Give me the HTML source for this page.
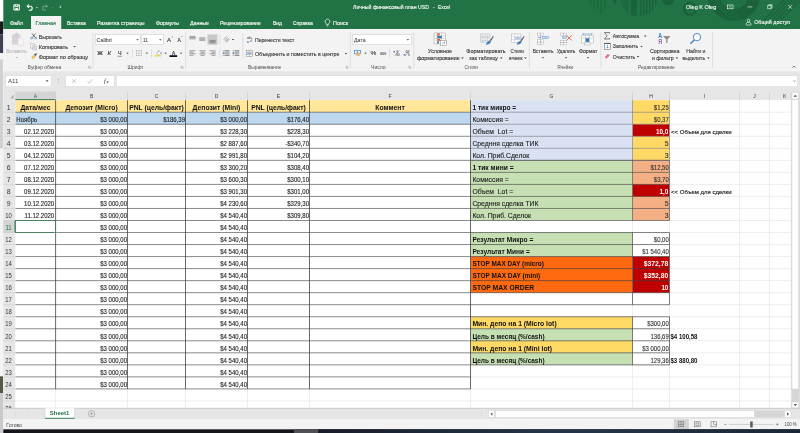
<!DOCTYPE html>
<html lang="ru">
<head>
<meta charset="utf-8">
<title>Личный финансовый план USD - Excel</title>
<style>
html,body{margin:0;padding:0;background:#fff;}
body{width:800px;height:433px;overflow:hidden;position:relative;font-family:'Liberation Sans', sans-serif;}
#app{position:absolute;left:0;top:0;width:800px;height:433px;overflow:hidden;}
svg{display:block;font-family:'Liberation Sans', sans-serif;}
svg{will-change:transform;}
svg text{white-space:pre;}
</style>
</head>
<body>
<div id="app">
<svg width="800" height="433" viewBox="0 0 800 433">
<rect x="0.00" y="0.00" width="800.00" height="433.00" fill="#ffffff"/>
<rect x="0.00" y="0.00" width="3.30" height="21.40" fill="#ffffff"/>
<rect x="0.00" y="21.40" width="3.30" height="13.00" fill="#1b1b1f"/>
<rect x="0.00" y="34.40" width="3.30" height="18.80" fill="#3b4450"/>
<rect x="0.00" y="53.20" width="3.30" height="380.00" fill="#f4f4f4"/>
<rect x="0.00" y="59.40" width="2.90" height="89.00" fill="#d0d0d0"/>
<rect x="0.00" y="376.30" width="3.00" height="16.90" fill="#555a43"/>
<rect x="0.00" y="393.20" width="3.30" height="40.00" fill="#cacaca"/>
<rect x="3.30" y="0.00" width="796.70" height="29.00" fill="#217346"/>
<defs><clipPath id="cpd"><circle cx="639" cy="-2" r="18.5"/></clipPath><clipPath id="cpt"><rect x="0" y="0" width="800" height="29"/></clipPath></defs>
<g fill="#1a6239" stroke="none" clip-path="url(#cpt)">
<rect x="590.6" y="0" width="0.8" height="6"/>
<rect x="593.6" y="0" width="0.8" height="8"/>
<rect x="597" y="0" width="0.8" height="10.5"/>
<rect x="600.6" y="0" width="0.9" height="13.7"/>
<rect x="604.6" y="0" width="0.8" height="9"/>
<path d="M612,0 h4.4 v5.6 z"/>
<g clip-path="url(#cpd)"><rect x="620.6" y="0" width="8" height="20" opacity="0.55"/><rect x="631" y="0" width="5.6" height="20"/>
<rect x="640" y="0" width="1.5" height="20"/>
<rect x="643" y="0" width="1.5" height="20"/>
<rect x="646" y="0" width="1.5" height="20"/>
<rect x="649" y="0" width="1.5" height="20"/>
<rect x="652" y="0" width="1.5" height="20"/>
<rect x="655" y="0" width="1.5" height="20"/>
</g>
<circle cx="668" cy="-0.5" r="6"/>
</g>
<circle cx="690" cy="9" r="6" fill="none" stroke="#1a6239" stroke-width="2.4"/>
<circle cx="690" cy="9" r="1.6" fill="#1a6239"/>
<g clip-path="url(#cpt)"><circle cx="734" cy="-5" r="20" fill="none" stroke="#1a6239" stroke-width="12"/>
<g stroke="#217346" stroke-width="0.7">
<line x1="712.0" y1="0" x2="734.0" y2="22"/>
<line x1="715.2" y1="0" x2="737.2" y2="22"/>
<line x1="718.4" y1="0" x2="740.4" y2="22"/>
<line x1="721.6" y1="0" x2="743.6" y2="22"/>
</g>
<g stroke="#1a6239" stroke-width="1.1">
<line x1="764.0" y1="20" x2="786.0" y2="-2"/>
<line x1="768.2" y1="20" x2="790.2" y2="-2"/>
<line x1="772.4" y1="20" x2="794.4" y2="-2"/>
<line x1="776.6" y1="20" x2="798.6" y2="-2"/>
<line x1="780.8" y1="20" x2="802.8" y2="-2"/>
</g></g>
<rect x="3.30" y="29.00" width="796.70" height="42.60" fill="#f3f3f3"/>
<line x1="3.30" y1="71.80" x2="800.00" y2="71.80" stroke="#dcdcdc" stroke-width="0.7"/>
<rect x="3.30" y="72.10" width="796.70" height="27.90" fill="#e6e6e6"/>
<rect x="31.00" y="16.00" width="30.20" height="13.20" fill="#f3f3f3"/>
<g fill="none" stroke="#ffffff" stroke-width="1.0"><path d="M13.9,4.8 h5.4 v5.2 h-5.4 z"/><path d="M15.2,4.8 v1.8 h2.8 v-1.8" /><rect x="15.4" y="8" width="2.4" height="2" fill="#ffffff" stroke="none"/></g>
<g fill="none" stroke="#ffffff" stroke-width="1.1"><path d="M27.6,6.2 h2.6 a2,2 0 0 1 0,4 h-1.4"/><path d="M28.9,4.6 L27.2,6.2 L28.9,7.8" /></g>
<path d="M35.91,6.91 L37.89,6.91 L36.90,7.94 Z" fill="#ffffff" stroke="none" stroke-width="1"/>
<g fill="none" stroke="#7fb096" stroke-width="0.9"><path d="M47,6.2 h-2.6 a2,2 0 0 0 0,4 h1.4"/><path d="M45.7,4.6 L47.4,6.2 L45.7,7.8" /></g>
<path d="M51.51,6.91 L53.49,6.91 L52.50,7.94 Z" fill="#6aa384" stroke="none" stroke-width="1"/>
<line x1="59.40" y1="6.20" x2="61.40" y2="6.20" stroke="#ffffff" stroke-width="0.5"/>
<path d="M59.41,7.30 L61.39,7.30 L60.40,8.34 Z" fill="#ffffff" stroke="none" stroke-width="1"/>
<text x="353.00" y="8.97" font-size="4.9" fill="#ffffff" textLength="76.00" lengthAdjust="spacingAndGlyphs" stroke="#ffffff" stroke-width="0.1">Личный финансовый план USD</text>
<text x="433.00" y="8.97" font-size="4.9" fill="#ffffff" stroke="#ffffff" stroke-width="0.1">-</text>
<text x="438.00" y="8.97" font-size="4.9" fill="#ffffff" textLength="12.20" lengthAdjust="spacingAndGlyphs" stroke="#ffffff" stroke-width="0.1">Excel</text>
<text x="686.00" y="8.57" font-size="4.9" fill="#ffffff" textLength="30.30" lengthAdjust="spacingAndGlyphs" stroke="#ffffff" stroke-width="0.1">Oleg K Oleg</text>
<g fill="none" stroke="#ffffff" stroke-width="0.6"><rect x="727.4" y="5" width="5.6" height="3.8"/><path d="M729.2,7.4 L730.2,6.2 L731.2,7.4"/></g>
<line x1="747.50" y1="6.90" x2="752.30" y2="6.90" stroke="#ffffff" stroke-width="0.6"/>
<g fill="none" stroke="#ffffff" stroke-width="0.6"><rect x="767.8" y="5.6" width="3.2" height="3.2"/><path d="M768.8,5.6 v-0.9 h3.2 v3.2 h-1"/></g>
<g stroke="#ffffff" stroke-width="0.6"><line x1="788.2" y1="4.8" x2="792" y2="8.8"/><line x1="792" y1="4.8" x2="788.2" y2="8.8"/></g>
<g fill="none" stroke="#ffffff" stroke-width="0.6"><circle cx="748.6" cy="20.6" r="1.3"/><path d="M746.2,25 v-0.8 a2.4,2 0 0 1 4.8,0 v0.8 z"/></g>
<text x="754.20" y="23.97" font-size="4.9" fill="#ffffff" textLength="36.00" lengthAdjust="spacingAndGlyphs" stroke="#ffffff" stroke-width="0.1">Общий доступ</text>
<text x="10.00" y="24.60" font-size="5.0" fill="#ffffff" textLength="13.10" lengthAdjust="spacingAndGlyphs" stroke="#ffffff" stroke-width="0.1">Файл</text>
<text x="35.60" y="24.60" font-size="5.0" fill="#217346" textLength="20.30" lengthAdjust="spacingAndGlyphs" stroke="#217346" stroke-width="0.1">Главная</text>
<text x="66.90" y="24.60" font-size="5.0" fill="#ffffff" textLength="19.10" lengthAdjust="spacingAndGlyphs" stroke="#ffffff" stroke-width="0.1">Вставка</text>
<text x="96.90" y="24.60" font-size="5.0" fill="#ffffff" textLength="47.50" lengthAdjust="spacingAndGlyphs" stroke="#ffffff" stroke-width="0.1">Разметка страницы</text>
<text x="156.00" y="24.60" font-size="5.0" fill="#ffffff" textLength="23.00" lengthAdjust="spacingAndGlyphs" stroke="#ffffff" stroke-width="0.1">Формулы</text>
<text x="190.00" y="24.60" font-size="5.0" fill="#ffffff" textLength="19.00" lengthAdjust="spacingAndGlyphs" stroke="#ffffff" stroke-width="0.1">Данные</text>
<text x="220.00" y="24.60" font-size="5.0" fill="#ffffff" textLength="41.00" lengthAdjust="spacingAndGlyphs" stroke="#ffffff" stroke-width="0.1">Рецензирование</text>
<text x="273.00" y="24.60" font-size="5.0" fill="#ffffff" textLength="9.00" lengthAdjust="spacingAndGlyphs" stroke="#ffffff" stroke-width="0.1">Вид</text>
<text x="292.80" y="24.60" font-size="5.0" fill="#ffffff" textLength="20.20" lengthAdjust="spacingAndGlyphs" stroke="#ffffff" stroke-width="0.1">Справка</text>
<text x="333.00" y="24.60" font-size="5.0" fill="#ffffff" textLength="15.00" lengthAdjust="spacingAndGlyphs" stroke="#ffffff" stroke-width="0.1">Поиск</text>
<g fill="none" stroke="#ffffff" stroke-width="0.7"><path d="M326.6,24.6 v-0.8 a2.4,2.4 0 1 1 1.8,0 v0.8 z"/><line x1="326.7" y1="26" x2="328.3" y2="26"/></g>
<g>
<rect x="12.1" y="34.6" width="8.2" height="9.9" rx="0.6" fill="#d8d2d6"/>
<path d="M14.4,35.4 v-1 a0.6,0.6 0 0 1 0.6,-0.6 h0.5 a1,1 0 0 1 2,0 h0.5 a0.6,0.6 0 0 1 0.6,0.6 v1 z" fill="#cbc5c9"/><circle cx="16.5" cy="33.9" r="0.45" fill="#f3f3f3"/>
<path d="M18,38.2 h3.4 l2,2 v5.4 h-5.4 z" fill="#f6f2f6" stroke="#d9d3d8" stroke-width="0.4"/>
</g>
<text x="6.20" y="53.10" font-size="5.0" fill="#b9b9b9" textLength="20.60" lengthAdjust="spacingAndGlyphs" stroke="#b9b9b9" stroke-width="0.1">Вставить</text>
<path d="M15.59,57.00 L18.01,57.00 L16.80,58.26 Z" fill="#a8a8a8" stroke="none" stroke-width="1"/>
<g fill="none" stroke="#444" stroke-width="0.7"><line x1="31.9" y1="33.4" x2="35.2" y2="37.4"/><line x1="35.7" y1="33.4" x2="32.4" y2="37.4"/></g>
<g fill="none" stroke="#3b7bbf" stroke-width="0.6"><ellipse cx="31.8" cy="38.1" rx="1.2" ry="0.8"/><ellipse cx="35.8" cy="38.1" rx="1.2" ry="0.8"/></g>
<text x="38.80" y="38.80" font-size="5.0" fill="#333" textLength="23.10" lengthAdjust="spacingAndGlyphs" stroke="#333" stroke-width="0.1">Вырезать</text>
<g fill="#fafafa" stroke="#8a8a8a" stroke-width="0.4"><path d="M30.6,43.4 h2.6 l1.2,1.2 v3.6 h-3.8 z"/><path d="M32.8,45 h2.6 l1.2,1.2 v3.6 h-3.8 z"/></g>
<rect x="33.6" y="46.6" width="2" height="0.5" fill="#3b7bbf"/><rect x="33.6" y="47.8" width="2" height="0.5" fill="#3b7bbf"/>
<text x="38.80" y="48.80" font-size="5.0" fill="#333" textLength="29.30" lengthAdjust="spacingAndGlyphs" stroke="#333" stroke-width="0.1">Копировать</text>
<path d="M73.33,45.97 L75.86,45.97 L74.60,47.29 Z" fill="#3a3a3a" stroke="none" stroke-width="1"/>
<path d="M31,57.2 l2.6,-2.2 l2,1.8 l-2.4,2.6 z" fill="#f0c060"/><path d="M33.8,54.8 l2.2,-1.8 l1,1 l-1.6,2.2 z" fill="#666"/>
<text x="38.80" y="59.00" font-size="5.0" fill="#333" textLength="49.30" lengthAdjust="spacingAndGlyphs" stroke="#333" stroke-width="0.1">Формат по образцу</text>
<text x="27.80" y="68.97" font-size="4.9" fill="#4d4d4d" textLength="33.50" lengthAdjust="spacingAndGlyphs">Буфер обмена</text>
<g fill="none" stroke="#777" stroke-width="0.4"><path d="M88.50,68.30 v-2 h2"/><path d="M89.30,67.10 l1.2,1.2 m0,-0.9 v0.9 h-0.9"/></g>
<line x1="93.00" y1="32.50" x2="93.00" y2="68.50" stroke="#d5d5d5" stroke-width="0.7"/>
<rect x="95.3" y="34.6" width="45.4" height="10" fill="#fff" stroke="#c6c6c6" stroke-width="0.5"/>
<rect x="141.9" y="34.6" width="21.6" height="10" fill="#fff" stroke="#c6c6c6" stroke-width="0.5"/>
<text x="96.60" y="41.50" font-size="5.0" fill="#555" textLength="15.20" lengthAdjust="spacingAndGlyphs" stroke="#555" stroke-width="0.1">Calibri</text>
<path d="M136.24,39.17 L138.76,39.17 L137.50,40.49 Z" fill="#3a3a3a" stroke="none" stroke-width="1"/>
<text x="143.00" y="41.50" font-size="5.0" fill="#555" textLength="5.00" lengthAdjust="spacingAndGlyphs" stroke="#555" stroke-width="0.1">11</text>
<path d="M159.04,39.17 L161.56,39.17 L160.30,40.49 Z" fill="#3a3a3a" stroke="none" stroke-width="1"/>
<text x="166.90" y="42.04" font-size="6.0" fill="#333" stroke="#333" stroke-width="0.1">A</text>
<path d="M171.4,37.2 l0.8,-1 l0.8,1 z" fill="#3b7bbf"/>
<text x="177.60" y="42.00" font-size="5.0" fill="#333" stroke="#333" stroke-width="0.1">A</text>
<path d="M181,36.2 l0.8,1 l0.8,-1 z" fill="#3b7bbf"/>
<text x="97.30" y="55.14" font-size="5.4" fill="#333" font-weight="700" textLength="5.60" lengthAdjust="spacingAndGlyphs">Ж</text>
<text x="107.50" y="55.14" font-size="5.4" fill="#333" font-style="italic" textLength="3.60" lengthAdjust="spacingAndGlyphs" stroke="#333" stroke-width="0.1">К</text>
<text x="117.80" y="54.94" font-size="5.4" fill="#333" textLength="3.80" lengthAdjust="spacingAndGlyphs" stroke="#333" stroke-width="0.1">Ч</text>
<line x1="117.60" y1="56.30" x2="121.80" y2="56.30" stroke="#333" stroke-width="0.5"/>
<path d="M126.23,52.67 L128.76,52.67 L127.50,53.99 Z" fill="#3a3a3a" stroke="none" stroke-width="1"/>
<line x1="132.50" y1="49.00" x2="132.50" y2="58.00" stroke="#d5d5d5" stroke-width="0.7"/>
<g fill="#fff" stroke="#b4b4b4" stroke-width="0.6"><rect x="136.3" y="50.5" width="5.4" height="5.2"/><line x1="139" y1="50.5" x2="139" y2="55.7"/><line x1="136.3" y1="53.1" x2="141.7" y2="53.1"/></g>
<path d="M145.64,52.67 L148.16,52.67 L146.90,53.99 Z" fill="#3a3a3a" stroke="none" stroke-width="1"/>
<line x1="151.50" y1="49.00" x2="151.50" y2="58.00" stroke="#d5d5d5" stroke-width="0.7"/>
<path d="M156.6,53.6 l2.4,-2.8 l2.4,2.2 l-2.6,2.2 z" fill="#fff" stroke="#777" stroke-width="0.45"/><path d="M161.2,52 q0.9,1.3 0.1,2.2 q-0.8,-0.9 -0.1,-2.2" fill="#3b7bbf"/><path d="M158.4,50.2 v2" stroke="#777" stroke-width="0.4"/>
<rect x="154.30" y="55.20" width="6.90" height="1.30" fill="#e8dc3c"/>
<path d="M164.34,52.67 L166.86,52.67 L165.60,53.99 Z" fill="#3a3a3a" stroke="none" stroke-width="1"/>
<text x="173.50" y="54.63" font-size="4.8" fill="#222" text-anchor="middle" stroke="#222" stroke-width="0.1">A</text>
<rect x="169.50" y="55.20" width="7.60" height="1.80" fill="#111"/>
<path d="M179.74,52.67 L182.26,52.67 L181.00,53.99 Z" fill="#3a3a3a" stroke="none" stroke-width="1"/>
<text x="127.50" y="68.97" font-size="4.9" fill="#4d4d4d" textLength="16.00" lengthAdjust="spacingAndGlyphs">Шрифт</text>
<g fill="none" stroke="#777" stroke-width="0.4"><path d="M181.00,68.30 v-2 h2"/><path d="M181.80,67.10 l1.2,1.2 m0,-0.9 v0.9 h-0.9"/></g>
<line x1="185.60" y1="32.50" x2="185.60" y2="68.50" stroke="#d5d5d5" stroke-width="0.7"/>
<rect x="207.50" y="34.50" width="10.00" height="10.20" fill="#c8c8c8"/>
<line x1="189.40" y1="36.40" x2="195.60" y2="36.40" stroke="#666" stroke-width="0.62"/>
<line x1="189.40" y1="37.60" x2="195.60" y2="37.60" stroke="#666" stroke-width="0.62"/>
<line x1="189.40" y1="38.80" x2="195.60" y2="38.80" stroke="#666" stroke-width="0.62"/>
<line x1="199.20" y1="37.90" x2="205.40" y2="37.90" stroke="#666" stroke-width="0.62"/>
<line x1="199.20" y1="39.10" x2="205.40" y2="39.10" stroke="#666" stroke-width="0.62"/>
<line x1="199.20" y1="40.30" x2="205.40" y2="40.30" stroke="#666" stroke-width="0.62"/>
<line x1="209.40" y1="40.40" x2="215.60" y2="40.40" stroke="#666" stroke-width="0.62"/>
<line x1="209.40" y1="41.60" x2="215.60" y2="41.60" stroke="#666" stroke-width="0.62"/>
<line x1="209.40" y1="42.80" x2="215.60" y2="42.80" stroke="#666" stroke-width="0.62"/>
<line x1="219.80" y1="34.50" x2="219.80" y2="44.50" stroke="#d5d5d5" stroke-width="0.7"/>
<g stroke="#666" stroke-width="0.5" fill="none"><path d="M223.6,39.6 l3.2,-3.2 m-2.2,4.2 l3.2,-3.2 m-2.2,4.2 l3.2,-3.2"/><path d="M226.2,42.2 l3,-3" stroke="#444"/></g>
<path d="M231.74,38.97 L234.26,38.97 L233.00,40.29 Z" fill="#3a3a3a" stroke="none" stroke-width="1"/>
<line x1="189.40" y1="50.80" x2="195.60" y2="50.80" stroke="#666" stroke-width="0.62"/>
<line x1="189.40" y1="52.30" x2="193.40" y2="52.30" stroke="#666" stroke-width="0.62"/>
<line x1="189.40" y1="53.80" x2="195.60" y2="53.80" stroke="#666" stroke-width="0.62"/>
<line x1="189.40" y1="55.30" x2="193.40" y2="55.30" stroke="#666" stroke-width="0.62"/>
<line x1="199.40" y1="50.80" x2="205.60" y2="50.80" stroke="#666" stroke-width="0.62"/>
<line x1="200.50" y1="52.30" x2="204.50" y2="52.30" stroke="#666" stroke-width="0.62"/>
<line x1="199.40" y1="53.80" x2="205.60" y2="53.80" stroke="#666" stroke-width="0.62"/>
<line x1="200.50" y1="55.30" x2="204.50" y2="55.30" stroke="#666" stroke-width="0.62"/>
<line x1="209.40" y1="50.80" x2="215.60" y2="50.80" stroke="#666" stroke-width="0.62"/>
<line x1="211.60" y1="52.30" x2="215.60" y2="52.30" stroke="#666" stroke-width="0.62"/>
<line x1="209.40" y1="53.80" x2="215.60" y2="53.80" stroke="#666" stroke-width="0.62"/>
<line x1="211.60" y1="55.30" x2="215.60" y2="55.30" stroke="#666" stroke-width="0.62"/>
<line x1="219.80" y1="49.00" x2="219.80" y2="58.00" stroke="#d5d5d5" stroke-width="0.7"/>
<line x1="225.20" y1="50.80" x2="229.40" y2="50.80" stroke="#666" stroke-width="0.62"/>
<line x1="225.20" y1="52.30" x2="229.40" y2="52.30" stroke="#666" stroke-width="0.62"/>
<line x1="225.20" y1="53.80" x2="229.40" y2="53.80" stroke="#666" stroke-width="0.62"/>
<line x1="225.20" y1="55.30" x2="229.40" y2="55.30" stroke="#666" stroke-width="0.62"/>
<line x1="222.60" y1="50.80" x2="229.60" y2="50.80" stroke="#777" stroke-width="0.55"/>
<line x1="222.60" y1="55.30" x2="229.60" y2="55.30" stroke="#777" stroke-width="0.55"/>
<rect x="222.79999999999998" y="52.3" width="1.8" height="1.6" fill="#3b7bbf"/>
<line x1="235.00" y1="50.80" x2="239.20" y2="50.80" stroke="#666" stroke-width="0.62"/>
<line x1="235.00" y1="52.30" x2="239.20" y2="52.30" stroke="#666" stroke-width="0.62"/>
<line x1="235.00" y1="53.80" x2="239.20" y2="53.80" stroke="#666" stroke-width="0.62"/>
<line x1="235.00" y1="55.30" x2="239.20" y2="55.30" stroke="#666" stroke-width="0.62"/>
<line x1="232.40" y1="50.80" x2="239.40" y2="50.80" stroke="#777" stroke-width="0.55"/>
<line x1="232.40" y1="55.30" x2="239.40" y2="55.30" stroke="#777" stroke-width="0.55"/>
<rect x="232.6" y="52.3" width="1.8" height="1.6" fill="#3b7bbf"/>
<line x1="242.90" y1="33.50" x2="242.90" y2="58.50" stroke="#d5d5d5" stroke-width="0.7"/>
<text x="247.00" y="39.43" font-size="3.9" fill="#6a6a6a" font-weight="700" textLength="4.80" lengthAdjust="spacingAndGlyphs">ab</text>
<text x="247.00" y="42.83" font-size="3.9" fill="#6a6a6a" font-weight="700">c</text>
<path d="M252,38.6 v2.6 h-2 m0.9,-0.9 l-0.9,0.9 l0.9,0.9" fill="none" stroke="#3b7bbf" stroke-width="0.5"/>
<text x="255.00" y="41.70" font-size="5.0" fill="#333" textLength="39.40" lengthAdjust="spacingAndGlyphs" stroke="#333" stroke-width="0.1">Перенести текст</text>
<rect x="246.2" y="50.4" width="6.2" height="6" fill="#fdfdfd" stroke="#858585" stroke-width="0.5"/><rect x="246.5" y="52.3" width="5.6" height="2.2" fill="#bcd4ee"/><g stroke="#858585" stroke-width="0.4"><line x1="246.2" y1="52.2" x2="252.4" y2="52.2"/><line x1="246.2" y1="54.6" x2="252.4" y2="54.6"/><line x1="249.3" y1="50.4" x2="249.3" y2="52.2"/><line x1="249.3" y1="54.6" x2="249.3" y2="56.4"/></g><path d="M247.4,53.4 h3.8" stroke="#3b7bbf" stroke-width="0.45" fill="none"/>
<text x="255.00" y="55.70" font-size="5.0" fill="#333" textLength="84.40" lengthAdjust="spacingAndGlyphs" stroke="#333" stroke-width="0.1">Объединить и поместить в центре</text>
<path d="M344.63,52.97 L347.16,52.97 L345.90,54.29 Z" fill="#3a3a3a" stroke="none" stroke-width="1"/>
<text x="248.10" y="68.97" font-size="4.9" fill="#4d4d4d" textLength="33.20" lengthAdjust="spacingAndGlyphs">Выравнивание</text>
<g fill="none" stroke="#777" stroke-width="0.4"><path d="M346.00,68.30 v-2 h2"/><path d="M346.80,67.10 l1.2,1.2 m0,-0.9 v0.9 h-0.9"/></g>
<line x1="350.40" y1="32.50" x2="350.40" y2="68.50" stroke="#d5d5d5" stroke-width="0.7"/>
<rect x="352.8" y="34.6" width="58.4" height="10" fill="#fff" stroke="#c6c6c6" stroke-width="0.5"/>
<text x="354.10" y="41.60" font-size="5.0" fill="#555" textLength="11.40" lengthAdjust="spacingAndGlyphs" stroke="#555" stroke-width="0.1">Дата</text>
<path d="M406.63,39.17 L409.16,39.17 L407.90,40.49 Z" fill="#3a3a3a" stroke="none" stroke-width="1"/>
<rect x="354.3" y="50.3" width="6.2" height="3.6" fill="#fff" stroke="#3b7bbf" stroke-width="0.7"/><circle cx="357.4" cy="52.1" r="0.9" fill="#3b7bbf"/><ellipse cx="358.6" cy="53.4" rx="2.1" ry="0.8" fill="#e8b25a"/><ellipse cx="358.2" cy="55.2" rx="2.1" ry="0.8" fill="#e8b25a"/>
<path d="M364.34,52.67 L366.87,52.67 L365.60,53.99 Z" fill="#3a3a3a" stroke="none" stroke-width="1"/>
<text x="370.50" y="55.41" font-size="6.2" fill="#3a3a3a" textLength="5.80" lengthAdjust="spacingAndGlyphs" stroke="#3a3a3a" stroke-width="0.1">%</text>
<text x="380.00" y="55.00" font-size="4.4" fill="#505050" font-weight="700" textLength="6.20" lengthAdjust="spacingAndGlyphs">000</text>
<line x1="389.60" y1="49.00" x2="389.60" y2="58.00" stroke="#d5d5d5" stroke-width="0.7"/>
<g font-size="3" fill="#555" font-family="Liberation Sans, sans-serif"></g>
<rect x="393.5" y="50.9" width="1.5" height="1.5" fill="#3b7bbf"/><path d="M394.4,56.2 L399.2,50.4" stroke="#666" stroke-width="0.55"/>
<text x="396.60" y="52.69" font-size="3.2" fill="#666" font-weight="700">0</text>
<text x="396.20" y="56.29" font-size="3.2" fill="#666" font-weight="700">00</text>
<rect x="403.7" y="54" width="1.5" height="1.5" fill="#3b7bbf"/><path d="M405,56.2 L409.6,50.4" stroke="#666" stroke-width="0.55"/>
<text x="405.60" y="52.69" font-size="3.2" fill="#666" font-weight="700">00</text>
<text x="408.00" y="56.29" font-size="3.2" fill="#666" font-weight="700">0</text>
<text x="371.00" y="68.97" font-size="4.9" fill="#4d4d4d" textLength="14.60" lengthAdjust="spacingAndGlyphs">Число</text>
<g fill="none" stroke="#777" stroke-width="0.4"><path d="M408.80,68.30 v-2 h2"/><path d="M409.60,67.10 l1.2,1.2 m0,-0.9 v0.9 h-0.9"/></g>
<line x1="413.80" y1="32.50" x2="413.80" y2="68.50" stroke="#d5d5d5" stroke-width="0.7"/>
<g><rect x="434" y="33" width="11.6" height="10.9" fill="#fff" stroke="#9a9a9a" stroke-width="0.45"/>
<line x1="434" y1="35.72" x2="445.6" y2="35.72" stroke="#a8a8a8" stroke-width="0.4"/>
<line x1="434" y1="38.44" x2="445.6" y2="38.44" stroke="#a8a8a8" stroke-width="0.4"/>
<line x1="434" y1="41.16" x2="445.6" y2="41.16" stroke="#a8a8a8" stroke-width="0.4"/>
<line x1="437" y1="33" x2="437" y2="43.9" stroke="#a8a8a8" stroke-width="0.4"/><line x1="441.6" y1="33" x2="441.6" y2="43.9" stroke="#a8a8a8" stroke-width="0.4"/>
<rect x="437.2" y="33.3" width="2.6" height="2.2" fill="#e0603a"/><rect x="437.2" y="36" width="4.8" height="2.2" fill="#3b7bbf"/><rect x="437.2" y="38.7" width="3" height="2.2" fill="#e0603a"/><rect x="437.2" y="41.4" width="1.8" height="2.2" fill="#3b7bbf"/>
<rect x="440.6" y="40.4" width="5.8" height="4.8" fill="#fff" stroke="#777" stroke-width="0.45"/><path d="M442.4,43.8 l2.2,-2 m-0.2,2 v-2" stroke="#444" stroke-width="0.45" fill="none"/></g>
<text x="428.10" y="53.30" font-size="5.0" fill="#333" textLength="23.80" lengthAdjust="spacingAndGlyphs" stroke="#333" stroke-width="0.1">Условное</text>
<text x="416.90" y="59.90" font-size="5.0" fill="#333" textLength="42.80" lengthAdjust="spacingAndGlyphs" stroke="#333" stroke-width="0.1">форматирование</text>
<path d="M461.24,57.57 L463.76,57.57 L462.50,58.89 Z" fill="#3a3a3a" stroke="none" stroke-width="1"/>
<rect x="480.4" y="34" width="9.6" height="8.4" fill="#fff" stroke="#999" stroke-width="0.4"/>
<rect x="480.4" y="36.1" width="9.6" height="2.1" fill="#dbe8f5"/><rect x="480.4" y="40.3" width="9.6" height="2.1" fill="#dbe8f5"/>
<line x1="482.80" y1="34" x2="482.80" y2="42.4" stroke="#aaa" stroke-width="0.35"/>
<line x1="485.20" y1="34" x2="485.20" y2="42.4" stroke="#aaa" stroke-width="0.35"/>
<line x1="487.60" y1="34" x2="487.60" y2="42.4" stroke="#aaa" stroke-width="0.35"/>
<line x1="480.4" y1="36.10" x2="490.0" y2="36.10" stroke="#aaa" stroke-width="0.35"/>
<line x1="480.4" y1="38.20" x2="490.0" y2="38.20" stroke="#aaa" stroke-width="0.35"/>
<line x1="480.4" y1="40.30" x2="490.0" y2="40.30" stroke="#aaa" stroke-width="0.35"/>
<path d="M489.6,40.6 l3.4,-4.6 l0.9,0.6 l-3.2,4.8 z" fill="#666"/><path d="M485.8,44.8 q1.2,-3.6 4.2,-4 l1,1.2 q-1.6,3 -5.2,2.8" fill="#3b7bbf"/>
<text x="466.30" y="53.30" font-size="5.0" fill="#333" textLength="39.30" lengthAdjust="spacingAndGlyphs" stroke="#333" stroke-width="0.1">Форматировать</text>
<text x="469.40" y="59.90" font-size="5.0" fill="#333" textLength="28.60" lengthAdjust="spacingAndGlyphs" stroke="#333" stroke-width="0.1">как таблицу</text>
<path d="M500.04,57.57 L502.56,57.57 L501.30,58.89 Z" fill="#3a3a3a" stroke="none" stroke-width="1"/>
<rect x="511.4" y="34" width="9.6" height="8.4" fill="#fff" stroke="#999" stroke-width="0.4"/>
<rect x="514.6" y="36.8" width="6.4" height="2.8" fill="#b7d3ee"/>
<line x1="514.60" y1="34" x2="514.60" y2="42.4" stroke="#aaa" stroke-width="0.35"/>
<line x1="517.80" y1="34" x2="517.80" y2="42.4" stroke="#aaa" stroke-width="0.35"/>
<line x1="511.4" y1="36.80" x2="521.0" y2="36.80" stroke="#aaa" stroke-width="0.35"/>
<line x1="511.4" y1="39.60" x2="521.0" y2="39.60" stroke="#aaa" stroke-width="0.35"/>
<path d="M520.4,40.6 l3.4,-4.6 l0.9,0.6 l-3.2,4.8 z" fill="#666"/><path d="M516.6,44.8 q1.2,-3.6 4.2,-4 l1,1.2 q-1.6,3 -5.2,2.8" fill="#3b7bbf"/>
<text x="510.60" y="53.30" font-size="5.0" fill="#333" textLength="13.20" lengthAdjust="spacingAndGlyphs" stroke="#333" stroke-width="0.1">Стили</text>
<text x="508.80" y="59.90" font-size="5.0" fill="#333" textLength="13.80" lengthAdjust="spacingAndGlyphs" stroke="#333" stroke-width="0.1">ячеек</text>
<path d="M524.13,57.57 L526.66,57.57 L525.40,58.89 Z" fill="#3a3a3a" stroke="none" stroke-width="1"/>
<text x="464.40" y="68.97" font-size="4.9" fill="#4d4d4d" textLength="13.60" lengthAdjust="spacingAndGlyphs">Стили</text>
<line x1="529.40" y1="32.50" x2="529.40" y2="68.50" stroke="#d5d5d5" stroke-width="0.7"/>
<g fill="#fff" stroke="#9a9a9a" stroke-width="0.4"><rect x="537.8" y="33.1" width="3" height="2.3"/><rect x="540.8" y="33.1" width="3" height="2.3"/><rect x="537.8" y="39.8" width="3" height="2.3"/><rect x="540.8" y="39.8" width="3" height="2.3"/><rect x="537.8" y="42.1" width="3" height="2.3"/><rect x="540.8" y="42.1" width="3" height="2.3"/><rect x="542.7" y="36.4" width="6" height="2.3" fill="#c6dbef" stroke="#5b93cf"/><line x1="545.7" y1="36.4" x2="545.7" y2="38.7" stroke="#5b93cf"/></g><path d="M537.9,37.5 h3.2 m-1.1,-1 l1.1,1 l-1.1,1" stroke="#3b7bbf" stroke-width="0.6" fill="none"/>
<text x="532.80" y="53.30" font-size="5.0" fill="#333" textLength="20.70" lengthAdjust="spacingAndGlyphs" stroke="#333" stroke-width="0.1">Вставить</text>
<path d="M541.74,57.27 L544.26,57.27 L543.00,58.59 Z" fill="#3a3a3a" stroke="none" stroke-width="1"/>
<g fill="#fff" stroke="#9a9a9a" stroke-width="0.4"><rect x="560.3" y="33.1" width="3" height="2.3"/><rect x="563.3" y="33.1" width="3" height="2.3"/><rect x="562.8" y="36.4" width="3.9" height="2.3" fill="#c6dbef" stroke="#5b93cf"/><rect x="560.3" y="40.3" width="3" height="2.3"/><rect x="563.3" y="40.3" width="3" height="2.3"/><rect x="560.3" y="42.6" width="3" height="2.3"/><rect x="563.3" y="42.6" width="3" height="2.3"/></g><path d="M566.6,35.3 l5.2,5.2 m0,-5.2 l-5.2,5.2" stroke="#e0523a" stroke-width="0.9" fill="none"/>
<text x="556.90" y="53.30" font-size="5.0" fill="#333" textLength="18.50" lengthAdjust="spacingAndGlyphs" stroke="#333" stroke-width="0.1">Удалить</text>
<path d="M564.74,57.27 L567.26,57.27 L566.00,58.59 Z" fill="#3a3a3a" stroke="none" stroke-width="1"/>
<g fill="#fff" stroke="#999" stroke-width="0.4"><rect x="581.6" y="35.8" width="11.6" height="7.2"/><line x1="585.4" y1="35.8" x2="585.4" y2="43"/><line x1="589.4" y1="35.8" x2="589.4" y2="43"/><line x1="581.6" y1="38" x2="593.2" y2="38"/><rect x="584.2" y="43" width="6.4" height="2"/></g><rect x="585.6" y="38.2" width="3.6" height="3.8" fill="#3b7bbf"/><path d="M583,34 h8.8 m-8.8,-0.9 v1.8 m8.8,-1.8 v1.8" stroke="#3b7bbf" stroke-width="0.5" fill="none"/>
<text x="579.00" y="53.30" font-size="5.0" fill="#333" textLength="18.50" lengthAdjust="spacingAndGlyphs" stroke="#333" stroke-width="0.1">Формат</text>
<path d="M586.74,57.27 L589.26,57.27 L588.00,58.59 Z" fill="#3a3a3a" stroke="none" stroke-width="1"/>
<text x="557.30" y="68.97" font-size="4.9" fill="#4d4d4d" textLength="15.80" lengthAdjust="spacingAndGlyphs">Ячейки</text>
<line x1="600.90" y1="32.50" x2="600.90" y2="68.50" stroke="#d5d5d5" stroke-width="0.7"/>
<path d="M609.6,33.6 v-1 h-5.2 l2.8,3.2 l-2.8,3.2 h5.2 v-1" fill="none" stroke="#444" stroke-width="0.7"/>
<text x="612.80" y="38.00" font-size="5.0" fill="#333" textLength="26.20" lengthAdjust="spacingAndGlyphs" stroke="#333" stroke-width="0.1">Автосумма</text>
<path d="M644.03,35.57 L646.56,35.57 L645.30,36.89 Z" fill="#3a3a3a" stroke="none" stroke-width="1"/>
<rect x="604.6" y="43.6" width="5.8" height="5.8" fill="#fff" stroke="#555" stroke-width="0.5"/><line x1="604.6" y1="43.4" x2="610.4" y2="43.4" stroke="#444" stroke-width="0.8"/><path d="M607.5,44.8 v3.2 m-1.2,-1.2 l1.2,1.4 l1.2,-1.4" stroke="#3b7bbf" stroke-width="0.6" fill="none"/>
<text x="612.80" y="48.40" font-size="5.0" fill="#333" textLength="25.30" lengthAdjust="spacingAndGlyphs" stroke="#333" stroke-width="0.1">Заполнить</text>
<path d="M640.24,45.97 L642.76,45.97 L641.50,47.29 Z" fill="#3a3a3a" stroke="none" stroke-width="1"/>
<path d="M604.6,57.2 l3.4,-3.4 l1.8,1.6 l-3.4,3.4 z" fill="#e8708e"/>
<text x="612.80" y="58.50" font-size="5.0" fill="#333" textLength="22.40" lengthAdjust="spacingAndGlyphs" stroke="#333" stroke-width="0.1">Очистить</text>
<path d="M636.74,56.07 L639.26,56.07 L638.00,57.39 Z" fill="#3a3a3a" stroke="none" stroke-width="1"/>
<text x="658.20" y="38.04" font-size="6.6" fill="#3b7bbf" font-weight="700" textLength="3.90" lengthAdjust="spacingAndGlyphs">A</text>
<text x="658.20" y="43.94" font-size="6.6" fill="#9a5fb8" font-weight="700" textLength="3.90" lengthAdjust="spacingAndGlyphs">Я</text>
<path d="M663.4,36.4 h6.8 l-2.8,3 v3.6 h-1.2 v-3.6 z" fill="#8c8c8c"/><line x1="663.4" y1="36.5" x2="670.2" y2="36.5" stroke="#666" stroke-width="0.5"/>
<text x="650.00" y="53.30" font-size="5.0" fill="#333" textLength="29.40" lengthAdjust="spacingAndGlyphs" stroke="#333" stroke-width="0.1">Сортировка</text>
<text x="651.90" y="59.90" font-size="5.0" fill="#333" textLength="21.80" lengthAdjust="spacingAndGlyphs" stroke="#333" stroke-width="0.1">и фильтр</text>
<path d="M675.63,57.57 L678.16,57.57 L676.90,58.89 Z" fill="#3a3a3a" stroke="none" stroke-width="1"/>
<circle cx="697" cy="37.1" r="3.7" fill="#fff" stroke="#3b7bbf" stroke-width="0.9"/><line x1="694.2" y1="40" x2="690.4" y2="43.8" stroke="#3b7bbf" stroke-width="1.3"/>
<text x="686.30" y="53.30" font-size="5.0" fill="#333" textLength="19.10" lengthAdjust="spacingAndGlyphs" stroke="#333" stroke-width="0.1">Найти и</text>
<text x="682.50" y="59.90" font-size="5.0" fill="#333" textLength="22.50" lengthAdjust="spacingAndGlyphs" stroke="#333" stroke-width="0.1">выделить</text>
<path d="M707.24,57.57 L709.76,57.57 L708.50,58.89 Z" fill="#3a3a3a" stroke="none" stroke-width="1"/>
<text x="638.00" y="68.97" font-size="4.9" fill="#4d4d4d" textLength="36.80" lengthAdjust="spacingAndGlyphs">Редактирование</text>
<line x1="712.50" y1="32.50" x2="712.50" y2="68.50" stroke="#d5d5d5" stroke-width="0.7"/>
<path d="M792.4,67.6 l1.6,-1.6 l1.6,1.6" fill="none" stroke="#444" stroke-width="0.65"/>
<rect x="5.7" y="75.7" width="45.5" height="11" fill="#fff" stroke="#d0d0d0" stroke-width="0.4"/>
<text x="7.90" y="83.21" font-size="5.9" fill="#4a4a4a" textLength="10.40" lengthAdjust="spacingAndGlyphs">A11</text>
<path d="M45.62,80.36 L48.59,80.36 L47.10,81.91 Z" fill="#555" stroke="none" stroke-width="1"/>
<circle cx="58.5" cy="79.5" r="0.38" fill="#7a7a7a"/>
<circle cx="58.5" cy="81.2" r="0.38" fill="#7a7a7a"/>
<circle cx="58.5" cy="82.9" r="0.38" fill="#7a7a7a"/>
<rect x="65.7" y="75.8" width="48.6" height="10.6" fill="#fff" stroke="#d0d0d0" stroke-width="0.4"/>
<path d="M72,79.3 l3.8,3.6 m0,-3.6 l-3.8,3.6" stroke="#a6a6a6" stroke-width="0.6" fill="none"/><path d="M87.6,81.4 l1.7,1.9 l3.4,-4" stroke="#a6a6a6" stroke-width="0.6" fill="none"/>
<text x="104" y="83" font-size="6.4" font-style="italic" fill="#3c3c3c" font-family="Liberation Serif, serif">f</text>
<text x="106.40" y="83.29" font-size="3.8" fill="#3c3c3c" font-weight="700" font-style="italic">x</text>
<rect x="116.3" y="75.7" width="681" height="11" fill="#fff" stroke="#d0d0d0" stroke-width="0.4"/>
<path d="M793.1,80.4 l1.3,1.3 l1.3,-1.3" fill="none" stroke="#555" stroke-width="0.6"/>
<rect x="15.30" y="100.20" width="775.90" height="308.00" fill="#fff"/>
<rect x="15.30" y="100.20" width="455.20" height="12.03" fill="#ffe699"/>
<rect x="15.30" y="112.23" width="455.20" height="12.03" fill="#bdd7ee"/>
<rect x="470.50" y="100.20" width="162.00" height="60.15" fill="#d9e1f2"/>
<rect x="470.50" y="160.35" width="162.00" height="60.15" fill="#c6e0b4"/>
<rect x="632.50" y="100.20" width="37.00" height="60.15" fill="#ffd966"/>
<rect x="632.50" y="124.26" width="37.00" height="12.03" fill="#c00000"/>
<rect x="632.50" y="160.35" width="37.00" height="60.15" fill="#f4b084"/>
<rect x="632.50" y="184.41" width="37.00" height="12.03" fill="#c00000"/>
<rect x="470.50" y="232.53" width="162.00" height="24.06" fill="#c6e0b4"/>
<rect x="470.50" y="256.59" width="162.00" height="36.09" fill="#ff6a10"/>
<rect x="632.50" y="256.59" width="37.00" height="36.09" fill="#c00000"/>
<rect x="470.50" y="316.74" width="162.00" height="12.03" fill="#ffd966"/>
<rect x="470.50" y="328.77" width="162.00" height="12.03" fill="#c6e0b4"/>
<rect x="470.50" y="340.80" width="162.00" height="12.03" fill="#ffd966"/>
<rect x="470.50" y="352.83" width="162.00" height="12.03" fill="#c6e0b4"/>
<g stroke="#e3e3e3" stroke-width="0.6">
<line x1="470.5" y1="100.2" x2="470.5" y2="408.2"/>
<line x1="632.5" y1="100.2" x2="632.5" y2="408.2"/>
<line x1="669.5" y1="100.2" x2="669.5" y2="408.2"/>
<line x1="739.5" y1="100.2" x2="739.5" y2="408.2"/>
<line x1="769.5" y1="100.2" x2="769.5" y2="408.2"/>
<line x1="791.2" y1="100.2" x2="791.2" y2="408.2"/>
<line x1="55.6" y1="388.91999999999996" x2="55.6" y2="408.2"/>
<line x1="127.5" y1="388.91999999999996" x2="127.5" y2="408.2"/>
<line x1="185.5" y1="388.91999999999996" x2="185.5" y2="408.2"/>
<line x1="247.5" y1="388.91999999999996" x2="247.5" y2="408.2"/>
<line x1="309.5" y1="388.91999999999996" x2="309.5" y2="408.2"/>
<line x1="669.5" y1="112.23" x2="791.2" y2="112.23"/>
<line x1="669.5" y1="124.26" x2="791.2" y2="124.26"/>
<line x1="669.5" y1="136.29" x2="791.2" y2="136.29"/>
<line x1="669.5" y1="148.32" x2="791.2" y2="148.32"/>
<line x1="669.5" y1="160.35" x2="791.2" y2="160.35"/>
<line x1="669.5" y1="172.38" x2="791.2" y2="172.38"/>
<line x1="669.5" y1="184.41" x2="791.2" y2="184.41"/>
<line x1="669.5" y1="196.44" x2="791.2" y2="196.44"/>
<line x1="669.5" y1="208.47" x2="791.2" y2="208.47"/>
<line x1="669.5" y1="220.50" x2="791.2" y2="220.50"/>
<line x1="669.5" y1="232.53" x2="791.2" y2="232.53"/>
<line x1="669.5" y1="244.56" x2="791.2" y2="244.56"/>
<line x1="669.5" y1="256.59" x2="791.2" y2="256.59"/>
<line x1="669.5" y1="268.62" x2="791.2" y2="268.62"/>
<line x1="669.5" y1="280.65" x2="791.2" y2="280.65"/>
<line x1="669.5" y1="292.68" x2="791.2" y2="292.68"/>
<line x1="669.5" y1="304.71" x2="791.2" y2="304.71"/>
<line x1="669.5" y1="316.74" x2="791.2" y2="316.74"/>
<line x1="669.5" y1="328.77" x2="791.2" y2="328.77"/>
<line x1="669.5" y1="340.80" x2="791.2" y2="340.80"/>
<line x1="669.5" y1="352.83" x2="791.2" y2="352.83"/>
<line x1="669.5" y1="364.86" x2="791.2" y2="364.86"/>
<line x1="669.5" y1="376.89" x2="791.2" y2="376.89"/>
<line x1="669.5" y1="388.92" x2="791.2" y2="388.92"/>
<line x1="15.3" y1="400.95" x2="791.2" y2="400.95"/>
<line x1="470.5" y1="364.86" x2="669.5" y2="364.86"/>
<line x1="470.5" y1="376.89" x2="669.5" y2="376.89"/>
<line x1="470.5" y1="388.92" x2="669.5" y2="388.92"/>
</g>
<g stroke="#4c4c4c" stroke-width="0.66">
<line x1="15.3" y1="112.23" x2="470.5" y2="112.23"/>
<line x1="15.3" y1="124.26" x2="470.5" y2="124.26"/>
<line x1="15.3" y1="136.29" x2="470.5" y2="136.29"/>
<line x1="15.3" y1="148.32" x2="470.5" y2="148.32"/>
<line x1="15.3" y1="160.35" x2="470.5" y2="160.35"/>
<line x1="15.3" y1="172.38" x2="470.5" y2="172.38"/>
<line x1="15.3" y1="184.41" x2="470.5" y2="184.41"/>
<line x1="15.3" y1="196.44" x2="470.5" y2="196.44"/>
<line x1="15.3" y1="208.47" x2="470.5" y2="208.47"/>
<line x1="15.3" y1="220.50" x2="470.5" y2="220.50"/>
<line x1="15.3" y1="232.53" x2="470.5" y2="232.53"/>
<line x1="15.3" y1="244.56" x2="470.5" y2="244.56"/>
<line x1="15.3" y1="256.59" x2="470.5" y2="256.59"/>
<line x1="15.3" y1="268.62" x2="470.5" y2="268.62"/>
<line x1="15.3" y1="280.65" x2="470.5" y2="280.65"/>
<line x1="15.3" y1="292.68" x2="470.5" y2="292.68"/>
<line x1="15.3" y1="304.71" x2="470.5" y2="304.71"/>
<line x1="15.3" y1="316.74" x2="470.5" y2="316.74"/>
<line x1="15.3" y1="328.77" x2="470.5" y2="328.77"/>
<line x1="15.3" y1="340.80" x2="470.5" y2="340.80"/>
<line x1="15.3" y1="352.83" x2="470.5" y2="352.83"/>
<line x1="15.3" y1="364.86" x2="470.5" y2="364.86"/>
<line x1="15.3" y1="376.89" x2="470.5" y2="376.89"/>
<line x1="15.3" y1="388.92" x2="470.5" y2="388.92"/>
</g>
<g stroke="#3a3a3a" stroke-width="0.75">
<line x1="55.6" y1="100.2" x2="55.6" y2="388.92"/>
<line x1="127.5" y1="100.2" x2="127.5" y2="388.92"/>
<line x1="185.5" y1="100.2" x2="185.5" y2="388.92"/>
<line x1="247.5" y1="100.2" x2="247.5" y2="388.92"/>
<line x1="309.5" y1="100.2" x2="309.5" y2="388.92"/>
<line x1="470.5" y1="100.2" x2="470.5" y2="388.92"/>
</g>
<g stroke="#7d7d85" stroke-width="0.65">
<line x1="470.5" y1="112.23" x2="669.5" y2="112.23"/>
<line x1="470.5" y1="124.26" x2="669.5" y2="124.26"/>
<line x1="470.5" y1="136.29" x2="669.5" y2="136.29"/>
<line x1="470.5" y1="148.32" x2="669.5" y2="148.32"/>
<line x1="470.5" y1="160.35" x2="669.5" y2="160.35"/>
<line x1="632.5" y1="100.20" x2="632.5" y2="160.35"/>
<line x1="669.5" y1="100.20" x2="669.5" y2="160.35"/>
</g>
<g stroke="#4a4a4a" stroke-width="0.65">
<line x1="470.5" y1="160.35" x2="669.5" y2="160.35"/>
<line x1="470.5" y1="172.38" x2="669.5" y2="172.38"/>
<line x1="470.5" y1="184.41" x2="669.5" y2="184.41"/>
<line x1="470.5" y1="196.44" x2="669.5" y2="196.44"/>
<line x1="470.5" y1="208.47" x2="669.5" y2="208.47"/>
<line x1="470.5" y1="220.50" x2="669.5" y2="220.50"/>
<line x1="632.5" y1="160.35" x2="632.5" y2="220.50"/>
<line x1="669.5" y1="160.35" x2="669.5" y2="220.50"/>
</g>
<g stroke="#3c3c3c" stroke-width="0.65">
<line x1="470.5" y1="232.53" x2="669.5" y2="232.53"/>
<line x1="470.5" y1="244.56" x2="669.5" y2="244.56"/>
<line x1="470.5" y1="256.59" x2="669.5" y2="256.59"/>
<line x1="470.5" y1="268.62" x2="669.5" y2="268.62"/>
<line x1="470.5" y1="280.65" x2="669.5" y2="280.65"/>
<line x1="470.5" y1="292.68" x2="669.5" y2="292.68"/>
<line x1="470.5" y1="304.71" x2="669.5" y2="304.71"/>
<line x1="632.5" y1="232.53" x2="632.5" y2="304.71"/>
<line x1="669.5" y1="232.53" x2="669.5" y2="304.71"/>
</g>
<g stroke="#3c3c3c" stroke-width="0.65">
<line x1="470.5" y1="316.74" x2="669.5" y2="316.74"/>
<line x1="470.5" y1="328.77" x2="669.5" y2="328.77"/>
<line x1="470.5" y1="340.80" x2="669.5" y2="340.80"/>
<line x1="470.5" y1="352.83" x2="669.5" y2="352.83"/>
<line x1="470.5" y1="364.86" x2="669.5" y2="364.86"/>
<line x1="632.5" y1="316.74" x2="632.5" y2="364.86"/>
<line x1="669.5" y1="316.74" x2="669.5" y2="364.86"/>
</g>
<rect x="15.30" y="91.50" width="40.30" height="8.30" fill="#d4d4d4"/>
<line x1="15.30" y1="99.60" x2="55.60" y2="99.60" stroke="#217346" stroke-width="0.9"/>
<g stroke="#c4c4c4" stroke-width="0.6">
<line x1="55.6" y1="92.5" x2="55.6" y2="99.8"/>
<line x1="127.5" y1="92.5" x2="127.5" y2="99.8"/>
<line x1="185.5" y1="92.5" x2="185.5" y2="99.8"/>
<line x1="247.5" y1="92.5" x2="247.5" y2="99.8"/>
<line x1="309.5" y1="92.5" x2="309.5" y2="99.8"/>
<line x1="470.5" y1="92.5" x2="470.5" y2="99.8"/>
<line x1="632.5" y1="92.5" x2="632.5" y2="99.8"/>
<line x1="669.5" y1="92.5" x2="669.5" y2="99.8"/>
<line x1="739.5" y1="92.5" x2="739.5" y2="99.8"/>
<line x1="769.5" y1="92.5" x2="769.5" y2="99.8"/>
<line x1="791.2" y1="92.5" x2="791.2" y2="99.8"/>
</g>
<text x="35.45" y="97.60" font-size="5.0" fill="#217346" text-anchor="middle">A</text>
<text x="91.55" y="97.60" font-size="5.0" fill="#3a3a3a" text-anchor="middle">B</text>
<text x="156.50" y="97.60" font-size="5.0" fill="#3a3a3a" text-anchor="middle">C</text>
<text x="216.50" y="97.60" font-size="5.0" fill="#3a3a3a" text-anchor="middle">D</text>
<text x="278.50" y="97.60" font-size="5.0" fill="#3a3a3a" text-anchor="middle">E</text>
<text x="390.00" y="97.60" font-size="5.0" fill="#3a3a3a" text-anchor="middle">F</text>
<text x="551.50" y="97.60" font-size="5.0" fill="#3a3a3a" text-anchor="middle">G</text>
<text x="651.00" y="97.60" font-size="5.0" fill="#3a3a3a" text-anchor="middle">H</text>
<text x="704.50" y="97.60" font-size="5.0" fill="#3a3a3a" text-anchor="middle">I</text>
<text x="754.50" y="97.60" font-size="5.0" fill="#3a3a3a" text-anchor="middle">J</text>
<text x="784.60" y="97.60" font-size="5.0" fill="#3a3a3a" text-anchor="middle">K</text>
<path d="M13.8,94.6 v4 h-4 z" fill="#b5b5b5"/>
<rect x="3.30" y="100.20" width="12.00" height="308.00" fill="#e6e6e6"/>
<rect x="3.30" y="220.50" width="12.00" height="12.03" fill="#d4d4d4"/>
<line x1="15.10" y1="220.50" x2="15.10" y2="232.53" stroke="#217346" stroke-width="0.9"/>
<g stroke="#c8c8c8" stroke-width="0.5">
<line x1="3.3" y1="112.23" x2="15.3" y2="112.23"/>
<line x1="3.3" y1="124.26" x2="15.3" y2="124.26"/>
<line x1="3.3" y1="136.29" x2="15.3" y2="136.29"/>
<line x1="3.3" y1="148.32" x2="15.3" y2="148.32"/>
<line x1="3.3" y1="160.35" x2="15.3" y2="160.35"/>
<line x1="3.3" y1="172.38" x2="15.3" y2="172.38"/>
<line x1="3.3" y1="184.41" x2="15.3" y2="184.41"/>
<line x1="3.3" y1="196.44" x2="15.3" y2="196.44"/>
<line x1="3.3" y1="208.47" x2="15.3" y2="208.47"/>
<line x1="3.3" y1="220.50" x2="15.3" y2="220.50"/>
<line x1="3.3" y1="232.53" x2="15.3" y2="232.53"/>
<line x1="3.3" y1="244.56" x2="15.3" y2="244.56"/>
<line x1="3.3" y1="256.59" x2="15.3" y2="256.59"/>
<line x1="3.3" y1="268.62" x2="15.3" y2="268.62"/>
<line x1="3.3" y1="280.65" x2="15.3" y2="280.65"/>
<line x1="3.3" y1="292.68" x2="15.3" y2="292.68"/>
<line x1="3.3" y1="304.71" x2="15.3" y2="304.71"/>
<line x1="3.3" y1="316.74" x2="15.3" y2="316.74"/>
<line x1="3.3" y1="328.77" x2="15.3" y2="328.77"/>
<line x1="3.3" y1="340.80" x2="15.3" y2="340.80"/>
<line x1="3.3" y1="352.83" x2="15.3" y2="352.83"/>
<line x1="3.3" y1="364.86" x2="15.3" y2="364.86"/>
<line x1="3.3" y1="376.89" x2="15.3" y2="376.89"/>
<line x1="3.3" y1="388.92" x2="15.3" y2="388.92"/>
<line x1="3.3" y1="400.95" x2="15.3" y2="400.95"/>
</g>
<text x="8.60" y="109.95" font-size="6.9" fill="#333" text-anchor="middle">1</text>
<text x="8.60" y="121.98" font-size="6.9" fill="#333" text-anchor="middle">2</text>
<text x="8.60" y="134.01" font-size="6.9" fill="#333" text-anchor="middle">3</text>
<text x="8.60" y="146.04" font-size="6.9" fill="#333" text-anchor="middle">4</text>
<text x="8.60" y="158.07" font-size="6.9" fill="#333" text-anchor="middle">5</text>
<text x="8.60" y="170.10" font-size="6.9" fill="#333" text-anchor="middle">6</text>
<text x="8.60" y="182.13" font-size="6.9" fill="#333" text-anchor="middle">7</text>
<text x="8.60" y="194.16" font-size="6.9" fill="#333" text-anchor="middle">8</text>
<text x="8.60" y="206.19" font-size="6.9" fill="#333" text-anchor="middle">9</text>
<text x="8.60" y="218.22" font-size="6.9" fill="#333" text-anchor="middle" textLength="6.60" lengthAdjust="spacingAndGlyphs">10</text>
<text x="8.60" y="230.25" font-size="6.9" fill="#217346" text-anchor="middle" textLength="6.16" lengthAdjust="spacingAndGlyphs">11</text>
<text x="8.60" y="242.28" font-size="6.9" fill="#333" text-anchor="middle" textLength="6.60" lengthAdjust="spacingAndGlyphs">12</text>
<text x="8.60" y="254.31" font-size="6.9" fill="#333" text-anchor="middle" textLength="6.60" lengthAdjust="spacingAndGlyphs">13</text>
<text x="8.60" y="266.34" font-size="6.9" fill="#333" text-anchor="middle" textLength="6.60" lengthAdjust="spacingAndGlyphs">14</text>
<text x="8.60" y="278.37" font-size="6.9" fill="#333" text-anchor="middle" textLength="6.60" lengthAdjust="spacingAndGlyphs">15</text>
<text x="8.60" y="290.40" font-size="6.9" fill="#333" text-anchor="middle" textLength="6.60" lengthAdjust="spacingAndGlyphs">16</text>
<text x="8.60" y="302.43" font-size="6.9" fill="#333" text-anchor="middle" textLength="6.60" lengthAdjust="spacingAndGlyphs">17</text>
<text x="8.60" y="314.46" font-size="6.9" fill="#333" text-anchor="middle" textLength="6.60" lengthAdjust="spacingAndGlyphs">18</text>
<text x="8.60" y="326.49" font-size="6.9" fill="#333" text-anchor="middle" textLength="6.60" lengthAdjust="spacingAndGlyphs">19</text>
<text x="8.60" y="338.52" font-size="6.9" fill="#333" text-anchor="middle" textLength="6.60" lengthAdjust="spacingAndGlyphs">20</text>
<text x="8.60" y="350.55" font-size="6.9" fill="#333" text-anchor="middle" textLength="6.60" lengthAdjust="spacingAndGlyphs">21</text>
<text x="8.60" y="362.58" font-size="6.9" fill="#333" text-anchor="middle" textLength="6.60" lengthAdjust="spacingAndGlyphs">22</text>
<text x="8.60" y="374.61" font-size="6.9" fill="#333" text-anchor="middle" textLength="6.60" lengthAdjust="spacingAndGlyphs">23</text>
<text x="8.60" y="386.64" font-size="6.9" fill="#333" text-anchor="middle" textLength="6.60" lengthAdjust="spacingAndGlyphs">24</text>
<text x="8.60" y="398.67" font-size="6.9" fill="#333" text-anchor="middle" textLength="6.60" lengthAdjust="spacingAndGlyphs">25</text>
<text x="8.60" y="410.70" font-size="6.9" fill="#333" text-anchor="middle" textLength="6.60" lengthAdjust="spacingAndGlyphs" clip-path="url(#cp26)">26</text>
<text x="35.45" y="109.90" font-size="6.8" fill="#111" text-anchor="middle" font-weight="700">Дата/мес</text>
<text x="91.55" y="109.90" font-size="6.8" fill="#111" text-anchor="middle" font-weight="700">Депозит (Micro)</text>
<text x="156.50" y="109.90" font-size="6.8" fill="#111" text-anchor="middle" font-weight="700">PNL (цель/факт)</text>
<text x="216.50" y="109.90" font-size="6.8" fill="#111" text-anchor="middle" font-weight="700">Депозит (Mini)</text>
<text x="278.50" y="109.90" font-size="6.8" fill="#111" text-anchor="middle" font-weight="700">PNL (цель/факт)</text>
<text x="390.00" y="109.90" font-size="6.8" fill="#111" text-anchor="middle" font-weight="700">Коммент</text>
<text x="16.30" y="121.98" font-size="7.0" fill="#222" textLength="20.89" lengthAdjust="spacingAndGlyphs" stroke="#222" stroke-width="0.12">Ноябрь</text>
<text x="54.20" y="134.01" font-size="7.0" fill="#222" text-anchor="end" textLength="30.13" lengthAdjust="spacingAndGlyphs" stroke="#222" stroke-width="0.12">02.12.2020</text>
<text x="54.20" y="146.04" font-size="7.0" fill="#222" text-anchor="end" textLength="30.13" lengthAdjust="spacingAndGlyphs" stroke="#222" stroke-width="0.12">03.12.2020</text>
<text x="54.20" y="158.07" font-size="7.0" fill="#222" text-anchor="end" textLength="30.13" lengthAdjust="spacingAndGlyphs" stroke="#222" stroke-width="0.12">04.12.2020</text>
<text x="54.20" y="170.10" font-size="7.0" fill="#222" text-anchor="end" textLength="30.13" lengthAdjust="spacingAndGlyphs" stroke="#222" stroke-width="0.12">07.12.2020</text>
<text x="54.20" y="182.13" font-size="7.0" fill="#222" text-anchor="end" textLength="30.13" lengthAdjust="spacingAndGlyphs" stroke="#222" stroke-width="0.12">08.12.2020</text>
<text x="54.20" y="194.16" font-size="7.0" fill="#222" text-anchor="end" textLength="30.13" lengthAdjust="spacingAndGlyphs" stroke="#222" stroke-width="0.12">09.12.2020</text>
<text x="54.20" y="206.19" font-size="7.0" fill="#222" text-anchor="end" textLength="30.13" lengthAdjust="spacingAndGlyphs" stroke="#222" stroke-width="0.12">10.12.2020</text>
<text x="54.20" y="218.22" font-size="7.0" fill="#222" text-anchor="end" textLength="29.68" lengthAdjust="spacingAndGlyphs" stroke="#222" stroke-width="0.12">11.12.2020</text>
<text x="127.00" y="121.98" font-size="7.0" fill="#222" text-anchor="end" textLength="26.78" lengthAdjust="spacingAndGlyphs" stroke="#222" stroke-width="0.12">$3 000,00</text>
<text x="127.00" y="134.01" font-size="7.0" fill="#222" text-anchor="end" textLength="26.78" lengthAdjust="spacingAndGlyphs" stroke="#222" stroke-width="0.12">$3 000,00</text>
<text x="127.00" y="146.04" font-size="7.0" fill="#222" text-anchor="end" textLength="26.78" lengthAdjust="spacingAndGlyphs" stroke="#222" stroke-width="0.12">$3 000,00</text>
<text x="127.00" y="158.07" font-size="7.0" fill="#222" text-anchor="end" textLength="26.78" lengthAdjust="spacingAndGlyphs" stroke="#222" stroke-width="0.12">$3 000,00</text>
<text x="127.00" y="170.10" font-size="7.0" fill="#222" text-anchor="end" textLength="26.78" lengthAdjust="spacingAndGlyphs" stroke="#222" stroke-width="0.12">$3 000,00</text>
<text x="127.00" y="182.13" font-size="7.0" fill="#222" text-anchor="end" textLength="26.78" lengthAdjust="spacingAndGlyphs" stroke="#222" stroke-width="0.12">$3 000,00</text>
<text x="127.00" y="194.16" font-size="7.0" fill="#222" text-anchor="end" textLength="26.78" lengthAdjust="spacingAndGlyphs" stroke="#222" stroke-width="0.12">$3 000,00</text>
<text x="127.00" y="206.19" font-size="7.0" fill="#222" text-anchor="end" textLength="26.78" lengthAdjust="spacingAndGlyphs" stroke="#222" stroke-width="0.12">$3 000,00</text>
<text x="127.00" y="218.22" font-size="7.0" fill="#222" text-anchor="end" textLength="26.78" lengthAdjust="spacingAndGlyphs" stroke="#222" stroke-width="0.12">$3 000,00</text>
<text x="127.00" y="230.25" font-size="7.0" fill="#222" text-anchor="end" textLength="26.78" lengthAdjust="spacingAndGlyphs" stroke="#222" stroke-width="0.12">$3 000,00</text>
<text x="127.00" y="242.28" font-size="7.0" fill="#222" text-anchor="end" textLength="26.78" lengthAdjust="spacingAndGlyphs" stroke="#222" stroke-width="0.12">$3 000,00</text>
<text x="127.00" y="254.31" font-size="7.0" fill="#222" text-anchor="end" textLength="26.78" lengthAdjust="spacingAndGlyphs" stroke="#222" stroke-width="0.12">$3 000,00</text>
<text x="127.00" y="266.34" font-size="7.0" fill="#222" text-anchor="end" textLength="26.78" lengthAdjust="spacingAndGlyphs" stroke="#222" stroke-width="0.12">$3 000,00</text>
<text x="127.00" y="278.37" font-size="7.0" fill="#222" text-anchor="end" textLength="26.78" lengthAdjust="spacingAndGlyphs" stroke="#222" stroke-width="0.12">$3 000,00</text>
<text x="127.00" y="290.40" font-size="7.0" fill="#222" text-anchor="end" textLength="26.78" lengthAdjust="spacingAndGlyphs" stroke="#222" stroke-width="0.12">$3 000,00</text>
<text x="127.00" y="302.43" font-size="7.0" fill="#222" text-anchor="end" textLength="26.78" lengthAdjust="spacingAndGlyphs" stroke="#222" stroke-width="0.12">$3 000,00</text>
<text x="127.00" y="314.46" font-size="7.0" fill="#222" text-anchor="end" textLength="26.78" lengthAdjust="spacingAndGlyphs" stroke="#222" stroke-width="0.12">$3 000,00</text>
<text x="127.00" y="326.49" font-size="7.0" fill="#222" text-anchor="end" textLength="26.78" lengthAdjust="spacingAndGlyphs" stroke="#222" stroke-width="0.12">$3 000,00</text>
<text x="127.00" y="338.52" font-size="7.0" fill="#222" text-anchor="end" textLength="26.78" lengthAdjust="spacingAndGlyphs" stroke="#222" stroke-width="0.12">$3 000,00</text>
<text x="127.00" y="350.55" font-size="7.0" fill="#222" text-anchor="end" textLength="26.78" lengthAdjust="spacingAndGlyphs" stroke="#222" stroke-width="0.12">$3 000,00</text>
<text x="127.00" y="362.58" font-size="7.0" fill="#222" text-anchor="end" textLength="26.78" lengthAdjust="spacingAndGlyphs" stroke="#222" stroke-width="0.12">$3 000,00</text>
<text x="127.00" y="374.61" font-size="7.0" fill="#222" text-anchor="end" textLength="26.78" lengthAdjust="spacingAndGlyphs" stroke="#222" stroke-width="0.12">$3 000,00</text>
<text x="127.00" y="386.64" font-size="7.0" fill="#222" text-anchor="end" textLength="26.78" lengthAdjust="spacingAndGlyphs" stroke="#222" stroke-width="0.12">$3 000,00</text>
<text x="185.00" y="121.98" font-size="7.0" fill="#222" text-anchor="end" textLength="21.76" lengthAdjust="spacingAndGlyphs" stroke="#222" stroke-width="0.12">$186,39</text>
<text x="247.00" y="121.98" font-size="7.0" fill="#222" text-anchor="end" textLength="26.78" lengthAdjust="spacingAndGlyphs" stroke="#222" stroke-width="0.12">$3 000,00</text>
<text x="247.00" y="134.01" font-size="7.0" fill="#222" text-anchor="end" textLength="26.78" lengthAdjust="spacingAndGlyphs" stroke="#222" stroke-width="0.12">$3 228,30</text>
<text x="247.00" y="146.04" font-size="7.0" fill="#222" text-anchor="end" textLength="26.78" lengthAdjust="spacingAndGlyphs" stroke="#222" stroke-width="0.12">$2 887,60</text>
<text x="247.00" y="158.07" font-size="7.0" fill="#222" text-anchor="end" textLength="26.78" lengthAdjust="spacingAndGlyphs" stroke="#222" stroke-width="0.12">$2 991,80</text>
<text x="247.00" y="170.10" font-size="7.0" fill="#222" text-anchor="end" textLength="26.78" lengthAdjust="spacingAndGlyphs" stroke="#222" stroke-width="0.12">$3 300,20</text>
<text x="247.00" y="182.13" font-size="7.0" fill="#222" text-anchor="end" textLength="26.78" lengthAdjust="spacingAndGlyphs" stroke="#222" stroke-width="0.12">$3 600,30</text>
<text x="247.00" y="194.16" font-size="7.0" fill="#222" text-anchor="end" textLength="26.78" lengthAdjust="spacingAndGlyphs" stroke="#222" stroke-width="0.12">$3 901,30</text>
<text x="247.00" y="206.19" font-size="7.0" fill="#222" text-anchor="end" textLength="26.78" lengthAdjust="spacingAndGlyphs" stroke="#222" stroke-width="0.12">$4 230,60</text>
<text x="247.00" y="218.22" font-size="7.0" fill="#222" text-anchor="end" textLength="26.78" lengthAdjust="spacingAndGlyphs" stroke="#222" stroke-width="0.12">$4 540,40</text>
<text x="247.00" y="230.25" font-size="7.0" fill="#222" text-anchor="end" textLength="26.78" lengthAdjust="spacingAndGlyphs" stroke="#222" stroke-width="0.12">$4 540,40</text>
<text x="247.00" y="242.28" font-size="7.0" fill="#222" text-anchor="end" textLength="26.78" lengthAdjust="spacingAndGlyphs" stroke="#222" stroke-width="0.12">$4 540,40</text>
<text x="247.00" y="254.31" font-size="7.0" fill="#222" text-anchor="end" textLength="26.78" lengthAdjust="spacingAndGlyphs" stroke="#222" stroke-width="0.12">$4 540,40</text>
<text x="247.00" y="266.34" font-size="7.0" fill="#222" text-anchor="end" textLength="26.78" lengthAdjust="spacingAndGlyphs" stroke="#222" stroke-width="0.12">$4 540,40</text>
<text x="247.00" y="278.37" font-size="7.0" fill="#222" text-anchor="end" textLength="26.78" lengthAdjust="spacingAndGlyphs" stroke="#222" stroke-width="0.12">$4 540,40</text>
<text x="247.00" y="290.40" font-size="7.0" fill="#222" text-anchor="end" textLength="26.78" lengthAdjust="spacingAndGlyphs" stroke="#222" stroke-width="0.12">$4 540,40</text>
<text x="247.00" y="302.43" font-size="7.0" fill="#222" text-anchor="end" textLength="26.78" lengthAdjust="spacingAndGlyphs" stroke="#222" stroke-width="0.12">$4 540,40</text>
<text x="247.00" y="314.46" font-size="7.0" fill="#222" text-anchor="end" textLength="26.78" lengthAdjust="spacingAndGlyphs" stroke="#222" stroke-width="0.12">$4 540,40</text>
<text x="247.00" y="326.49" font-size="7.0" fill="#222" text-anchor="end" textLength="26.78" lengthAdjust="spacingAndGlyphs" stroke="#222" stroke-width="0.12">$4 540,40</text>
<text x="247.00" y="338.52" font-size="7.0" fill="#222" text-anchor="end" textLength="26.78" lengthAdjust="spacingAndGlyphs" stroke="#222" stroke-width="0.12">$4 540,40</text>
<text x="247.00" y="350.55" font-size="7.0" fill="#222" text-anchor="end" textLength="26.78" lengthAdjust="spacingAndGlyphs" stroke="#222" stroke-width="0.12">$4 540,40</text>
<text x="247.00" y="362.58" font-size="7.0" fill="#222" text-anchor="end" textLength="26.78" lengthAdjust="spacingAndGlyphs" stroke="#222" stroke-width="0.12">$4 540,40</text>
<text x="247.00" y="374.61" font-size="7.0" fill="#222" text-anchor="end" textLength="26.78" lengthAdjust="spacingAndGlyphs" stroke="#222" stroke-width="0.12">$4 540,40</text>
<text x="247.00" y="386.64" font-size="7.0" fill="#222" text-anchor="end" textLength="26.78" lengthAdjust="spacingAndGlyphs" stroke="#222" stroke-width="0.12">$4 540,40</text>
<text x="309.00" y="121.98" font-size="7.0" fill="#222" text-anchor="end" textLength="21.76" lengthAdjust="spacingAndGlyphs" stroke="#222" stroke-width="0.12">$176,40</text>
<text x="309.00" y="134.01" font-size="7.0" fill="#222" text-anchor="end" textLength="21.76" lengthAdjust="spacingAndGlyphs" stroke="#222" stroke-width="0.12">$228,30</text>
<text x="309.00" y="146.04" font-size="7.0" fill="#222" text-anchor="end" textLength="23.77" lengthAdjust="spacingAndGlyphs" stroke="#222" stroke-width="0.12">-$340,70</text>
<text x="309.00" y="158.07" font-size="7.0" fill="#222" text-anchor="end" textLength="21.76" lengthAdjust="spacingAndGlyphs" stroke="#222" stroke-width="0.12">$104,20</text>
<text x="309.00" y="170.10" font-size="7.0" fill="#222" text-anchor="end" textLength="21.76" lengthAdjust="spacingAndGlyphs" stroke="#222" stroke-width="0.12">$308,40</text>
<text x="309.00" y="182.13" font-size="7.0" fill="#222" text-anchor="end" textLength="21.76" lengthAdjust="spacingAndGlyphs" stroke="#222" stroke-width="0.12">$300,10</text>
<text x="309.00" y="194.16" font-size="7.0" fill="#222" text-anchor="end" textLength="21.76" lengthAdjust="spacingAndGlyphs" stroke="#222" stroke-width="0.12">$301,00</text>
<text x="309.00" y="206.19" font-size="7.0" fill="#222" text-anchor="end" textLength="21.76" lengthAdjust="spacingAndGlyphs" stroke="#222" stroke-width="0.12">$329,30</text>
<text x="309.00" y="218.22" font-size="7.0" fill="#222" text-anchor="end" textLength="21.76" lengthAdjust="spacingAndGlyphs" stroke="#222" stroke-width="0.12">$309,80</text>
<text x="472.40" y="109.95" font-size="6.8" fill="#111" font-weight="700" textLength="43.80" lengthAdjust="spacingAndGlyphs">1 тик микро =</text>
<text x="472.40" y="121.98" font-size="6.8" fill="#222" stroke="#222" stroke-width="0.12">Комиссия =</text>
<text x="472.40" y="134.01" font-size="6.8" fill="#222" stroke="#222" stroke-width="0.12">Объем&#160; Lot =</text>
<text x="472.40" y="146.04" font-size="6.8" fill="#222" stroke="#222" stroke-width="0.12">Средння сделка ТИК</text>
<text x="472.40" y="158.07" font-size="6.8" fill="#222" stroke="#222" stroke-width="0.12">Кол. Приб.Сделок</text>
<text x="472.40" y="170.10" font-size="6.8" fill="#111" font-weight="700" textLength="41.20" lengthAdjust="spacingAndGlyphs">1 тик мини =</text>
<text x="472.40" y="182.13" font-size="6.8" fill="#222" stroke="#222" stroke-width="0.12">Комиссия =</text>
<text x="472.40" y="194.16" font-size="6.8" fill="#222" stroke="#222" stroke-width="0.12">Объем&#160; Lot =</text>
<text x="472.40" y="206.19" font-size="6.8" fill="#222" stroke="#222" stroke-width="0.12">Средння сделка ТИК</text>
<text x="472.40" y="218.22" font-size="6.8" fill="#222" stroke="#222" stroke-width="0.12">Кол. Приб. Сделок</text>
<text x="472.40" y="242.28" font-size="6.8" fill="#111" font-weight="700" textLength="60.90" lengthAdjust="spacingAndGlyphs">Результат Микро =</text>
<text x="472.40" y="254.31" font-size="6.8" fill="#111" font-weight="700" textLength="57.40" lengthAdjust="spacingAndGlyphs">Результат Мини =</text>
<text x="472.40" y="266.34" font-size="6.8" fill="#111" font-weight="700" textLength="71.50" lengthAdjust="spacingAndGlyphs">STOP MAX DAY (micro)</text>
<text x="472.40" y="278.37" font-size="6.8" fill="#111" font-weight="700" textLength="67.80" lengthAdjust="spacingAndGlyphs">STOP MAX DAY (mini)</text>
<text x="472.40" y="290.40" font-size="6.8" fill="#111" font-weight="700">STOP MAX ORDER</text>
<text x="472.40" y="326.49" font-size="6.8" fill="#111" font-weight="700">Мин. депо на 1 (Micro lot)</text>
<text x="472.40" y="338.52" font-size="6.8" fill="#111" font-weight="700" textLength="72.20" lengthAdjust="spacingAndGlyphs">Цель в месяц (%/cash)</text>
<text x="472.40" y="350.55" font-size="6.8" fill="#111" font-weight="700">Мин. депо на 1 (Mini lot)</text>
<text x="472.40" y="362.58" font-size="6.8" fill="#111" font-weight="700" textLength="72.20" lengthAdjust="spacingAndGlyphs">Цель в месяц (%/cash)</text>
<text x="668.70" y="109.95" font-size="6.9" fill="#333" text-anchor="end" textLength="14.85" lengthAdjust="spacingAndGlyphs" stroke="#333" stroke-width="0.12">$1,25</text>
<text x="668.70" y="121.98" font-size="6.9" fill="#333" text-anchor="end" textLength="14.85" lengthAdjust="spacingAndGlyphs" stroke="#333" stroke-width="0.12">$0,37</text>
<text x="668.70" y="146.04" font-size="6.9" fill="#333" text-anchor="end" stroke="#333" stroke-width="0.12">5</text>
<text x="668.70" y="158.07" font-size="6.9" fill="#333" text-anchor="end" stroke="#333" stroke-width="0.12">3</text>
<text x="668.70" y="170.10" font-size="6.9" fill="#333" text-anchor="end" textLength="18.15" lengthAdjust="spacingAndGlyphs" stroke="#333" stroke-width="0.12">$12,50</text>
<text x="668.70" y="182.13" font-size="6.9" fill="#333" text-anchor="end" textLength="14.85" lengthAdjust="spacingAndGlyphs" stroke="#333" stroke-width="0.12">$3,70</text>
<text x="668.70" y="206.19" font-size="6.9" fill="#333" text-anchor="end" stroke="#333" stroke-width="0.12">5</text>
<text x="668.70" y="218.22" font-size="6.9" fill="#333" text-anchor="end" stroke="#333" stroke-width="0.12">3</text>
<text x="668.70" y="242.28" font-size="6.9" fill="#333" text-anchor="end" textLength="14.85" lengthAdjust="spacingAndGlyphs" stroke="#333" stroke-width="0.12">$0,00</text>
<text x="668.70" y="254.31" font-size="6.9" fill="#333" text-anchor="end" textLength="26.40" lengthAdjust="spacingAndGlyphs" stroke="#333" stroke-width="0.12">$1 540,40</text>
<text x="668.70" y="326.49" font-size="6.9" fill="#333" text-anchor="end" textLength="21.45" lengthAdjust="spacingAndGlyphs" stroke="#333" stroke-width="0.12">$300,00</text>
<text x="668.70" y="338.52" font-size="6.9" fill="#333" text-anchor="end" textLength="18.15" lengthAdjust="spacingAndGlyphs" stroke="#333" stroke-width="0.12">136,69</text>
<text x="668.70" y="350.55" font-size="6.9" fill="#333" text-anchor="end" textLength="26.40" lengthAdjust="spacingAndGlyphs" stroke="#333" stroke-width="0.12">$3 000,00</text>
<text x="668.70" y="362.58" font-size="6.9" fill="#333" text-anchor="end" textLength="18.15" lengthAdjust="spacingAndGlyphs" stroke="#333" stroke-width="0.12">129,36</text>
<text x="668.30" y="134.01" font-size="7.1" fill="#fff" text-anchor="end" font-weight="700" textLength="12.40" lengthAdjust="spacingAndGlyphs">10,0</text>
<text x="668.30" y="194.16" font-size="7.1" fill="#fff" text-anchor="end" font-weight="700" textLength="8.80" lengthAdjust="spacingAndGlyphs">1,0</text>
<text x="668.30" y="266.34" font-size="7.1" fill="#fff" text-anchor="end" font-weight="700" textLength="24.50" lengthAdjust="spacingAndGlyphs">$372,78</text>
<text x="668.30" y="278.37" font-size="7.1" fill="#fff" text-anchor="end" font-weight="700" textLength="24.50" lengthAdjust="spacingAndGlyphs">$352,80</text>
<text x="668.30" y="290.40" font-size="7.1" fill="#fff" text-anchor="end" font-weight="700" textLength="6.90" lengthAdjust="spacingAndGlyphs">10</text>
<text x="671.10" y="134.01" font-size="6.0" fill="#111" stroke="#111" stroke-width="0.12">&lt;&lt; Объем для сделки</text>
<text x="671.10" y="194.16" font-size="6.0" fill="#111" stroke="#111" stroke-width="0.12">&lt;&lt; Объем для сделки</text>
<text x="670.50" y="338.52" font-size="6.9" fill="#111" font-weight="700" textLength="26.90" lengthAdjust="spacingAndGlyphs">$4 100,58</text>
<text x="670.50" y="362.58" font-size="6.9" fill="#111" font-weight="700" textLength="26.90" lengthAdjust="spacingAndGlyphs">$3 880,80</text>
<rect x="15.3" y="220.50" width="40.3" height="12.03" fill="none" stroke="#3a7d55" stroke-width="0.75"/>
<rect x="54.80" y="231.63" width="1.60" height="1.60" fill="#217346" stroke="#fff" stroke-width="0.3"/>
<rect x="791.20" y="91.50" width="8.80" height="316.70" fill="#dcdcdc"/>
<rect x="792" y="92.2" width="6.6" height="6.8" fill="#fff" stroke="#c8c8c8" stroke-width="0.4"/>
<path d="M793.5,96.8 l1.8,-2 l1.8,2 z" fill="#555"/>
<rect x="792" y="99.6" width="6.6" height="289.4" fill="#fff" stroke="#c8c8c8" stroke-width="0.4"/>
<rect x="792.00" y="389.20" width="6.60" height="12.60" fill="#d6d6d6"/>
<rect x="792" y="402" width="6.6" height="6" fill="#fff" stroke="#c8c8c8" stroke-width="0.4"/>
<path d="M793.5,404 l1.8,2 l1.8,-2 z" fill="#555"/>
<rect x="3.30" y="408.20" width="796.70" height="10.90" fill="#e6e6e6"/>
<line x1="3.30" y1="408.30" x2="800.00" y2="408.30" stroke="#bcbcbc" stroke-width="0.7"/>
<path d="M16.2,412.6 l-1.2,1.1 l1.2,1.1" fill="none" stroke="#c2c2c2" stroke-width="0.5"/><path d="M26.6,412.6 l1.2,1.1 l-1.2,1.1" fill="none" stroke="#c2c2c2" stroke-width="0.5"/>
<rect x="45.00" y="408.20" width="29.60" height="10.20" fill="#fff"/>
<line x1="45.00" y1="408.20" x2="45.00" y2="418.60" stroke="#c4c4c4" stroke-width="0.5"/>
<line x1="74.60" y1="408.20" x2="74.60" y2="418.60" stroke="#c4c4c4" stroke-width="0.5"/>
<line x1="45.00" y1="418.30" x2="74.60" y2="418.30" stroke="#217346" stroke-width="0.9"/>
<text x="49.80" y="415.27" font-size="5.2" fill="#217346" font-weight="700" textLength="19.60" lengthAdjust="spacingAndGlyphs">Sheet1</text>
<circle cx="91.6" cy="413.7" r="3.2" fill="none" stroke="#777" stroke-width="0.45"/><path d="M90,413.7 h3.2 m-1.6,-1.6 v3.2" stroke="#777" stroke-width="0.45"/>
<circle cx="481.5" cy="412" r="0.3" fill="#888"/>
<circle cx="481.5" cy="413.6" r="0.3" fill="#888"/>
<circle cx="481.5" cy="415.2" r="0.3" fill="#888"/>
<rect x="488.3" y="410.6" width="6" height="6.8" fill="#fff" stroke="#c8c8c8" stroke-width="0.4"/><path d="M492.4,412.2 l-2,1.8 l2,1.8 z" fill="#555"/>
<rect x="495.8" y="410.6" width="258.5" height="6.8" fill="#fff" stroke="#c8c8c8" stroke-width="0.4"/>
<rect x="754.60" y="410.60" width="29.80" height="6.80" fill="#d6d6d6"/>
<rect x="784.8" y="410.6" width="6.2" height="6.8" fill="#fff" stroke="#c8c8c8" stroke-width="0.4"/><path d="M787,412.2 l2,1.8 l-2,1.8 z" fill="#555"/>
<rect x="3.30" y="419.10" width="796.70" height="10.30" fill="#f3f3f3"/>
<text x="6.30" y="426.80" font-size="5.0" fill="#444" textLength="15.60" lengthAdjust="spacingAndGlyphs">Готово</text>
<rect x="673.80" y="419.30" width="15.00" height="9.80" fill="#d2d2d2"/>
<g fill="none" stroke="#5f5f5f" stroke-width="0.5"><rect x="678.2" y="421.8" width="5.6" height="5"/><line x1="681" y1="421.8" x2="681" y2="426.8"/><line x1="678.2" y1="424.3" x2="683.8" y2="424.3"/><rect x="694.6" y="421.8" width="5.6" height="5"/><rect x="696" y="423" width="2.8" height="2.6"/><rect x="711" y="421.8" width="5.6" height="5"/><path d="M713.6,421.8 v2.6 h3"/></g>
<line x1="724.20" y1="424.40" x2="726.60" y2="424.40" stroke="#555" stroke-width="0.5"/>
<line x1="729.00" y1="424.40" x2="774.00" y2="424.40" stroke="#a8a8a8" stroke-width="0.5"/>
<rect x="750.20" y="421.50" width="2.50" height="6.00" fill="#5a5a5a"/>
<line x1="776.20" y1="424.40" x2="778.60" y2="424.40" stroke="#555" stroke-width="0.5"/>
<line x1="777.40" y1="423.20" x2="777.40" y2="425.60" stroke="#555" stroke-width="0.5"/>
<text x="784.60" y="426.13" font-size="4.8" fill="#444" textLength="12.00" lengthAdjust="spacingAndGlyphs">100 %</text>
<rect x="3.30" y="429.30" width="796.70" height="3.70" fill="#14161b"/>
<rect x="294.00" y="429.30" width="24.00" height="3.70" fill="#4e5054"/>
<defs><linearGradient id="bg1" x1="0" x2="1"><stop offset="0" stop-color="#161c28"/><stop offset="0.5" stop-color="#25344a"/><stop offset="1" stop-color="#1b2638"/></linearGradient><clipPath id="cp26"><rect x="0" y="0" width="800" height="408.2"/></clipPath></defs>
<rect x="318.00" y="429.30" width="482.00" height="3.70" fill="url(#bg1)"/>
</svg>
</div>
</body>
</html>
